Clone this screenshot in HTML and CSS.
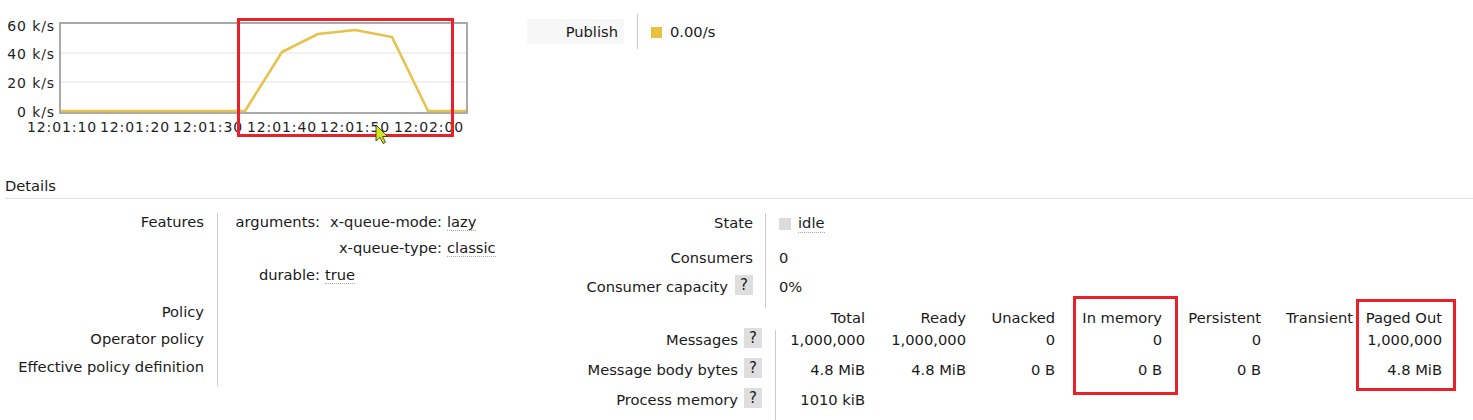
FILE: index.html
```html
<!DOCTYPE html>
<html>
<head>
<meta charset="utf-8">
<link rel="stylesheet" href="styles.css">
</head>
<body>
<div class="page">
  <div class="top">
    <svg class="chart" width="470" height="145" viewBox="0 0 470 145">
      <line class="grid" x1="61" y1="53" x2="466" y2="53"/>
      <line class="grid" x1="61" y1="82" x2="466" y2="82"/>
      <rect class="plot" x="60" y="23" width="407" height="90"/>
      <polyline class="series" points="61,111 245,111 282,52 318,34 355,30 392,37 428,111 466,111"/>
      <text class="ylab" x="55" y="31">60 k/s</text>
      <text class="ylab" x="55" y="59">40 k/s</text>
      <text class="ylab" x="55" y="88">20 k/s</text>
      <text class="ylab" x="55" y="117">0 k/s</text>
      <text class="xlab" x="62" y="132">12:01:10</text>
      <text class="xlab" x="135" y="132">12:01:20</text>
      <text class="xlab" x="208" y="132">12:01:30</text>
      <text class="xlab" x="282" y="132">12:01:40</text>
      <text class="xlab" x="355" y="132">12:01:50</text>
      <text class="xlab" x="429" y="132">12:02:00</text>
      <rect class="mark-rect" x="238.5" y="19.5" width="214" height="116"/>
      <polygon class="cursor" points="376,125 376,141 380,137.5 383,143.5 385.5,142.3 382.6,136.5 387.5,136.5"/>
    </svg>
    <div class="legend">
      <div class="series-btn">Publish</div>
      <div class="legend-divider"></div>
      <span class="swatch"></span>
      <span class="rate">0.00/s</span>
    </div>
  </div>

  <h2 class="section-title">Details</h2>

  <div class="details">
    <div class="facts">
      <div class="lbl">Features</div>
      <div class="val">
        <div class="kv">
          <div class="k">arguments:</div>
          <div class="kv2">
            <div class="k">x-queue-mode:</div><div><span class="u">lazy</span></div>
            <div class="k">x-queue-type:</div><div><span class="u">classic</span></div>
          </div>
          <div class="k">durable:</div><div><span class="u">true</span></div>
        </div>
      </div>
      <div class="lbl">Policy</div><div class="val"></div>
      <div class="lbl">Operator policy</div><div class="val"></div>
      <div class="lbl">Effective policy definition</div><div class="val"></div>
    </div>

    <div class="right">
      <div class="state-grid">
        <div class="lbl p15">State</div>
        <div class="val p15"><span class="state-box"></span><span class="u">idle</span></div>
        <div class="lbl p2">Consumers</div>
        <div class="val p2">0</div>
        <div class="lbl p15"><span>Consumer capacity</span><span class="help">?</span></div>
        <div class="val p15">0%</div>
      </div>

      <div class="msg-grid">
        <div class="hlbl"></div>
        <div class="c">Total</div><div class="c">Ready</div><div class="c">Unacked</div><div class="c">In memory</div><div class="c">Persistent</div><div class="c">Transient</div><div class="c">Paged Out</div>

        <div class="lbl"><span>Messages</span><span class="help">?</span></div>
        <div class="c">1,000,000</div><div class="c">1,000,000</div><div class="c">0</div><div class="c">0</div><div class="c">0</div><div class="c"></div><div class="c">1,000,000</div>

        <div class="lbl"><span>Message body bytes</span><span class="help">?</span></div>
        <div class="c">4.8 MiB</div><div class="c">4.8 MiB</div><div class="c">0 B</div><div class="c">0 B</div><div class="c">0 B</div><div class="c"></div><div class="c">4.8 MiB</div>

        <div class="lbl"><span>Process memory</span><span class="help">?</span></div>
        <div class="c">1010 kiB</div><div class="c"></div><div class="c"></div><div class="c"></div><div class="c"></div><div class="c"></div><div class="c"></div>
      </div>
    </div>
  </div>

  <div class="mark mark-mem"></div>
  <div class="mark mark-paged"></div>
</div>
</body>
</html>
```

FILE: styles.css
```css
body {
  margin: 0;
  background: #fff;
  color: #1a1a1a;
  font-family: "DejaVu Sans", "Liberation Sans", sans-serif;
  font-size: 14.7px;
}

.page {
  position: relative;
  width: 1473px;
  height: 420px;
  overflow: hidden;
}

/* chart */
.top {
  display: flex;
  height: 145px;
}

.chart {
  display: block;
  flex: none;
}

.chart .grid {
  stroke: #ececec;
  stroke-width: 1.5;
}

.chart .plot {
  fill: none;
  stroke: #a9a9a9;
  stroke-width: 2;
}

.chart .series {
  fill: none;
  stroke: #e6c34c;
  stroke-width: 2.6;
  stroke-linejoin: round;
}

.chart text {
  font-family: "DejaVu Sans", sans-serif;
  font-size: 14px;
  letter-spacing: 0.9px;
  fill: #1e1e1e;
}

.chart .ylab {
  text-anchor: end;
}

.chart .xlab {
  text-anchor: middle;
}

.chart .mark-rect {
  fill: none;
  stroke: #e8202a;
  stroke-width: 3;
}

.chart .cursor {
  fill: #d2e61e;
  stroke: #2a2a10;
  stroke-width: 0.8;
  stroke-linejoin: round;
}

/* legend */
.legend {
  display: flex;
  align-items: flex-start;
  margin-left: 57px;
  padding-top: 14px;
}

.series-btn {
  margin-top: 5px;
  width: 97px;
  height: 25px;
  line-height: 25px;
  box-sizing: border-box;
  padding-right: 6px;
  text-align: right;
  background: #f7f7f7;
}

.legend-divider {
  width: 1px;
  height: 35px;
  background: #c8c8c8;
  margin-left: 13px;
}

.swatch {
  width: 11px;
  height: 11px;
  background: #e8c13e;
  margin: 13px 0 0 13px;
}

.rate {
  margin: 9.4px 0 0 8px;
  line-height: 18px;
}

/* details */
.section-title {
  margin: 32px 0 0 5px;
  font-size: 14.7px;
  font-weight: normal;
  line-height: 18px;
  padding-bottom: 3px;
  border-bottom: 1px solid #dddddd;
}

.details {
  display: flex;
  margin: 13.5px 0 0 5px;
  line-height: 18px;
}

.facts {
  flex: none;
  width: 555px;
  display: grid;
  grid-template-columns: 213px 1fr;
  grid-template-rows: 90px 27.5px 27.5px 28.5px;
  align-content: start;
}

.facts .lbl {
  text-align: right;
  padding-right: 13px;
  border-right: 1px solid #cccccc;
  box-sizing: border-box;
}

.facts .val {
  padding-left: 14px;
}

.kv {
  display: grid;
  grid-template-columns: 88px auto;
  column-gap: 5px;
  row-gap: 8.7px;
  justify-content: start;
}

.kv2 {
  display: grid;
  grid-template-columns: 117px auto;
  column-gap: 5px;
  row-gap: 8.7px;
  justify-content: start;
}

.kv .k,
.kv2 .k {
  text-align: right;
}

.u {
  border-bottom: 1px dotted #a8a8a8;
}

/* right side */
.right {
  flex: none;
  width: 913px;
}

.state-grid {
  display: grid;
  grid-template-columns: 206px auto;
  grid-template-rows: 34px 30px 31.5px;
}

.state-grid .lbl {
  display: flex;
  justify-content: flex-end;
  align-items: flex-start;
  padding-right: 12px;
  border-right: 1px solid #cccccc;
  box-sizing: border-box;
}

.state-grid .val {
  padding-left: 13px;
  display: flex;
  align-items: flex-start;
}

.p15 {
  padding-top: 1.5px;
}

.p2 {
  padding-top: 2px;
}

.state-box {
  width: 12px;
  height: 12px;
  background: #dcdcdc;
  margin: 4px 7px 0 0;
}

.help {
  display: inline-block;
  width: 18px;
  height: 20px;
  line-height: 20px;
  margin: -3px 0 0 7px;
  text-align: center;
  font-size: 15px;
  background: #dedede;
  color: #1a1a1a;
}

.msg-grid {
  display: grid;
  grid-template-columns: 216px 89px 101px 89px 107px 99px 92px 89px;
  grid-template-rows: 22px 30px 30px 30px;
}

.msg-grid .c {
  text-align: right;
  padding-top: 1px;
  white-space: nowrap;
}

.msg-grid .lbl {
  display: flex;
  justify-content: flex-end;
  align-items: flex-start;
  padding: 1px 13px 0 0;
  border-right: 1px solid #cccccc;
  box-sizing: border-box;
}

.msg-grid .lbl .help {
  margin-left: 6px;
}

/* annotation overlays */
.mark {
  position: absolute;
  border: 3px solid #e8202a;
  box-sizing: border-box;
}

.mark-mem {
  left: 1073px;
  top: 296px;
  width: 105px;
  height: 99px;
}

.mark-paged {
  left: 1356px;
  top: 299px;
  width: 100px;
  height: 92px;
}
```
